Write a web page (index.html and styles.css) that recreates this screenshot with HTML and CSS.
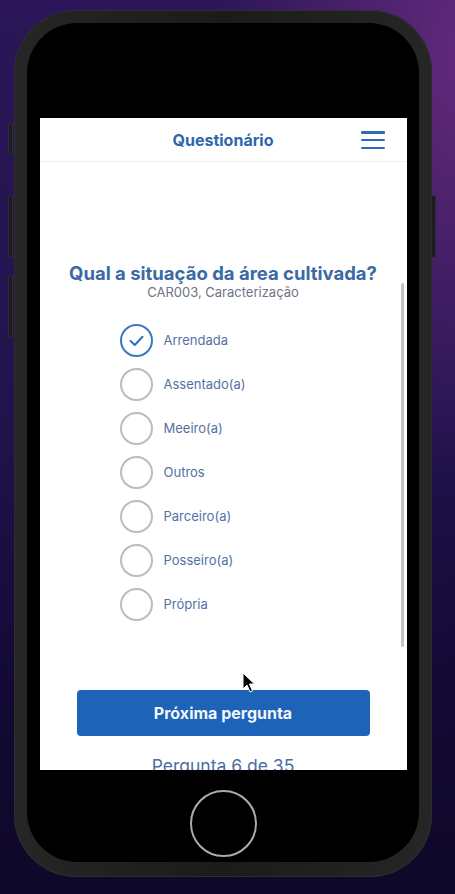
FILE: index.html
```html
<!DOCTYPE html>
<html lang="pt">
<head>
<meta charset="utf-8">
<title>Questionário</title>
<link rel="stylesheet" href="styles.css">
</head>
<body>
<div class="phone">
  <span class="side-btn left b1"></span>
  <span class="side-btn left b2"></span>
  <span class="side-btn left b3"></span>
  <span class="side-btn right b4"></span>
  <div class="bezel">
    <div class="screen">
      <header class="topbar">
        <h1 class="topbar-title">Questionário</h1>
        <button class="menu" aria-label="Menu"><span></span><span></span><span></span></button>
      </header>
      <main class="content">
        <h2 class="question">Qual a situação da área cultivada?</h2>
        <p class="code">CAR003, Caracterização</p>
        <ul class="options">
          <li class="option selected"><span class="radio"><svg viewBox="0 0 29 29" width="29" height="29"><path d="M8.5 15 L12.8 19 L20.5 10.8" fill="none" stroke="#2f6fc0" stroke-width="2" stroke-linecap="round" stroke-linejoin="round"/></svg></span><span class="label">Arrendada</span></li>
          <li class="option"><span class="radio"></span><span class="label">Assentado(a)</span></li>
          <li class="option"><span class="radio"></span><span class="label">Meeiro(a)</span></li>
          <li class="option"><span class="radio"></span><span class="label">Outros</span></li>
          <li class="option"><span class="radio"></span><span class="label">Parceiro(a)</span></li>
          <li class="option"><span class="radio"></span><span class="label">Posseiro(a)</span></li>
          <li class="option"><span class="radio"></span><span class="label">Própria</span></li>
        </ul>
        <button class="next">Próxima pergunta</button>
        <p class="progress">Pergunta 6 de 35</p>
      </main>
      <span class="scrollbar"></span>
      <svg class="cursor" width="14" height="22" viewBox="0 0 14 22"><path d="M1 1 L1 17 L5 13 L8 20 L10.5 19 L7.5 12 L12.5 12 Z" fill="#000" stroke="#fff" stroke-width="1"/></svg>
    </div>
    <div class="home"></div>
  </div>
</div>
</body>
</html>
```
FILE: styles.css
```css
* { box-sizing: border-box; }
html, body { margin: 0; padding: 0; }
body {
  width: 455px;
  height: 894px;
  overflow: hidden;
  font-family: Inter, "Liberation Sans", Arial, sans-serif;
  background:
    radial-gradient(ellipse 260px 420px at 470px 60px, rgba(110, 45, 130, 0.85), rgba(110, 45, 130, 0) 100%),
    linear-gradient(180deg, #2a1658 0%, #22134e 45%, #140a36 75%, #0e0828 100%);
  padding: 10px 0 0 14px;
}
.phone {
  position: relative;
  width: 418px;
  height: 867px;
  padding: 13px 13px 15px 13px;
  border-radius: 62px;
  background: linear-gradient(90deg, #262626 0%, #1b1b1b 50%, #262626 100%);
  box-shadow: inset 0 0 0 1px #2e2e2e;
}
.side-btn {
  position: absolute;
  width: 5px;
  background: #1e1c22;
  border: 1px solid #2f2c35;
}
.side-btn.left { left: -6px; border-radius: 2px 0 0 2px; }
.side-btn.right { right: -4px; border-radius: 0 2px 2px 0; }
.b1 { top: 113px; height: 32px; }
.b2 { top: 185px; height: 63px; }
.b3 { top: 265px; height: 63px; }
.b4 { top: 185px; height: 63px; }
.bezel {
  height: 100%;
  background: #000;
  border-radius: 50px;
  display: flex;
  flex-direction: column;
  align-items: center;
  padding-top: 95px;
}
.screen {
  position: relative;
  width: 367px;
  height: 652px;
  background: #fff;
  overflow: hidden;
}
.topbar {
  height: 44px;
  border-bottom: 1px solid #eef0f3;
  display: flex;
  align-items: center;
  justify-content: center;
  position: relative;
}
.topbar-title {
  margin: 0;
  font-size: 16px;
  font-weight: 700;
  color: #2c67ae;
}
.menu {
  position: absolute;
  right: 22px;
  top: 13px;
  width: 24px;
  height: 18px;
  padding: 0;
  border: 0;
  background: none;
  display: flex;
  flex-direction: column;
  justify-content: space-between;
}
.menu span {
  display: block;
  height: 2.5px;
  border-radius: 1px;
  background: #2d6cb8;
}
.content {
  display: flex;
  flex-direction: column;
  align-items: center;
  padding-top: 100px;
}
.question {
  margin: 0;
  font-size: 18.5px;
  line-height: 22px;
  font-weight: 700;
  color: #3a6aa5;
}
.code {
  margin: 0;
  font-size: 13px;
  line-height: 16px;
  color: #6e7582;
}
.options {
  list-style: none;
  margin: 18px 0 0 0;
  padding: 0 0 0 80px;
  align-self: stretch;
}
.option {
  height: 44px;
  display: flex;
  align-items: center;
}
.radio {
  width: 33px;
  height: 33px;
  border-radius: 50%;
  border: 2px solid #bcbcbc;
  display: flex;
  align-items: center;
  justify-content: center;
  flex: none;
}
.radio svg { width: 29px; height: 29px; }
.selected .radio { border-color: #3a78c4; }
.label {
  margin-left: 11px;
  font-size: 13px;
  color: #5372a3;
}
.next {
  margin-top: 64px;
  width: 293px;
  height: 46px;
  border: 0;
  border-radius: 4px;
  background: #1d63b8;
  color: #f2f6fc;
  font-family: inherit;
  font-size: 16px;
  font-weight: 700;
}
.progress {
  margin: 20px 0 0 0;
  font-size: 17.5px;
  line-height: 20px;
  color: #4a6fa5;
}
.scrollbar {
  position: absolute;
  left: 361px;
  top: 165px;
  width: 3px;
  height: 364px;
  border-radius: 2px;
  background: #c4c4c4;
}
.cursor {
  position: absolute;
  left: 202px;
  top: 554px;
}
.home {
  margin-top: 20px;
  width: 67px;
  height: 67px;
  border-radius: 50%;
  border: 2px solid #ababab;
}
```
